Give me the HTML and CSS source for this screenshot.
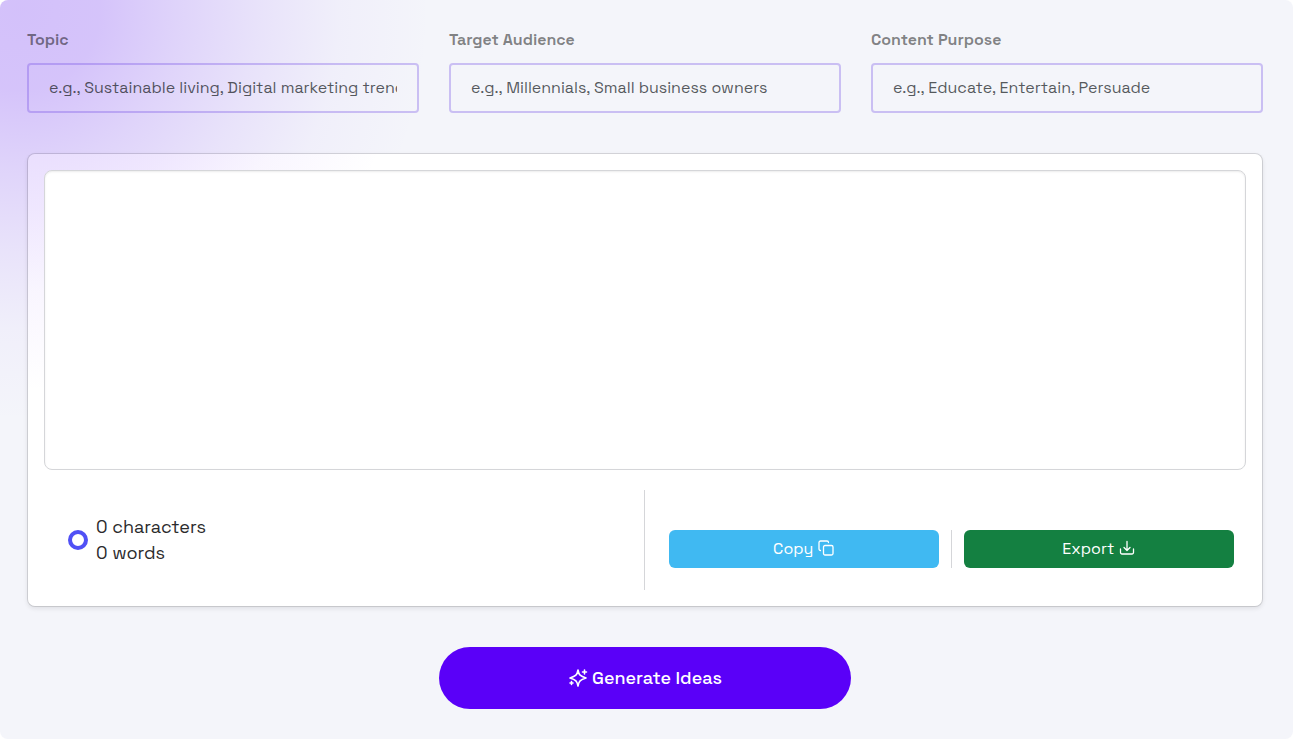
FILE: index.html
```html
<!DOCTYPE html>
<html lang="en">
<head>
<meta charset="utf-8">
<meta name="viewport" content="width=device-width, initial-scale=1">
<title>Content Idea Generator</title>
<link rel="stylesheet" href="styles.css">
</head>
<body>
<main class="panel">
  <form class="fields">
    <div class="field">
      <label class="field-label" for="topic">Topic</label>
      <input class="field-input" id="topic" type="text" placeholder="e.g., Sustainable living, Digital marketing trends">
    </div>
    <div class="field">
      <label class="field-label" for="audience">Target Audience</label>
      <input class="field-input" id="audience" type="text" placeholder="e.g., Millennials, Small business owners">
    </div>
    <div class="field">
      <label class="field-label" for="purpose">Content Purpose</label>
      <input class="field-input" id="purpose" type="text" placeholder="e.g., Educate, Entertain, Persuade">
    </div>
  </form>

  <section class="card">
    <textarea class="output" aria-label="Generated ideas"></textarea>
    <div class="card-footer">
      <div class="stats">
        <span class="ring"></span>
        <div class="counts">
          <div>0 characters</div>
          <div>0 words</div>
        </div>
      </div>
      <div class="actions">
        <div class="action">
          <button class="btn btn-copy" type="button">Copy
            <svg class="icon" viewBox="0 0 16 16"><rect x="5.500" y="5.500" width="9.500" height="9.500" rx="1.500"/><path d="M2.500 10.500a1.500 1.500 0 0 1-1.500-1.500V2.500A1.500 1.500 0 0 1 2.500 1H9a1.500 1.500 0 0 1 1.500 1.500"/></svg>
          </button>
        </div>
        <div class="action">
          <button class="btn btn-export" type="button">Export
            <svg class="icon" viewBox="0 0 16 16"><path d="M8 1.500v9M5 7.500l3 3 3-3M1.500 9v3.500a1.500 1.500 0 0 0 1.500 1.500h10a1.500 1.500 0 0 0 1.500-1.500V9"/></svg>
          </button>
        </div>
      </div>
    </div>
  </section>

  <button class="generate" type="button">
    <svg class="icon-sparkles" viewBox="0 0 20 20"><path d="M10 3C10.800 7.800 12.200 9.200 18 11C12.200 12.800 10.800 14.200 10 19C9.200 14.200 7.800 12.800 2 11C7.800 9.200 9.200 7.800 10 3Z"/><path d="M16.500 3v4M18.500 5h-4M3.500 14.500v3M5 16h-3"/></svg>
    Generate Ideas
  </button>
</main>
</body>
</html>
```
FILE: styles.css
```css
* { box-sizing: border-box; }

body {
  margin: 0;
  background: #fff;
  color: #2b2b2d;
  font-family: "Space Grotesk", Inter, sans-serif;
  font-size: 16px;
}

.panel {
  display: flex;
  flex-direction: column;
  min-height: 100vh;
  margin-right: 2px;
  padding: 28px 30px 30px 27px;
  border-radius: 8px;
  background:
    radial-gradient(circle at 20px 10px, rgba(150, 95, 250, 0.35) 0, rgba(150, 95, 250, 0.33) 80px, rgba(150, 95, 250, 0.22) 160px, rgba(150, 95, 250, 0.12) 240px, rgba(150, 95, 250, 0.04) 320px, rgba(150, 95, 250, 0) 410px),
    #f4f5fa;
}

.fields {
  display: grid;
  grid-template-columns: repeat(3, 1fr);
  gap: 30px;
}

.field { min-width: 0; }

.field-label {
  display: block;
  margin-bottom: 11px;
  color: rgba(0, 0, 0, 0.48);
  font-weight: 600;
  line-height: 24px;
}

.field-input {
  display: block;
  width: 100%;
  height: 50px;
  padding: 0 20px 2px;
  border: 2px solid rgba(105, 65, 230, 0.3);
  border-radius: 4px;
  background: transparent;
  color: #2b2b2d;
  font: inherit;
}

.field-input::placeholder {
  color: rgba(33, 37, 41, 0.75);
  opacity: 1;
}

.card {
  margin-top: 40px;
  padding: 16px;
  border: 1px solid rgba(0, 0, 0, 0.12);
  border-radius: 8px;
  background:
    radial-gradient(circle at 0 -143px, rgba(150, 95, 250, 0.22) 120px, rgba(150, 95, 250, 0.15) 200px, rgba(150, 95, 250, 0.06) 280px, rgba(150, 95, 250, 0) 380px),
    #fff;
  background-clip: padding-box;
  box-shadow: 0 2px 4px rgba(0, 0, 0, 0.08);
}

.output {
  display: block;
  width: 100%;
  height: 300px;
  padding: 12px;
  border: 1px solid #d5d6d9;
  border-radius: 8px;
  background: #fff;
  box-shadow: inset 0 1px 2px rgba(0, 0, 0, 0.08);
  font: inherit;
  resize: none;
}

.card-footer {
  display: grid;
  grid-template-columns: 1fr 1fr;
  margin-top: 20px;
}

.stats {
  display: flex;
  align-items: center;
  gap: 8px;
  height: 100px;
  padding: 0 24px;
  border-right: 1px solid #d5d6d9;
}

.ring {
  width: 20px;
  height: 20px;
  border: 4px solid #5050f5;
  border-radius: 50%;
}

.counts {
  font-size: 18px;
  line-height: 26px;
}

.actions {
  display: grid;
  grid-template-columns: 1fr 1fr;
  align-self: end;
  margin-bottom: 22px;
  padding-left: 12px;
}

.action { padding: 0 12px; }

.action:first-child { border-right: 1px solid #d5d6d9; }

.btn {
  display: flex;
  align-items: center;
  justify-content: center;
  gap: 5px;
  width: 100%;
  height: 38px;
  padding: 0 6px 2px;
  border: 0;
  border-radius: 6px;
  color: #fff;
  font: inherit;
}

.btn-copy { background: #40b9f2; }
.btn-export { background: #148041; }

.icon,
.icon-sparkles {
  fill: none;
  stroke: currentColor;
  stroke-linecap: round;
  stroke-linejoin: round;
}

.icon {
  width: 16px;
  height: 16px;
  stroke-width: 1.3;
}

.generate {
  display: flex;
  align-items: center;
  justify-content: center;
  align-self: center;
  gap: 4px;
  width: 33.333%;
  height: 62px;
  margin-top: 40px;
  padding: 0 6px 2px;
  border: 0;
  border-radius: 32px;
  background: #5a00f8;
  color: #fff;
  font: inherit;
  font-size: 18px;
  font-weight: 500;
}

.icon-sparkles {
  width: 20px;
  height: 20px;
  stroke-width: 1.6;
}
```
